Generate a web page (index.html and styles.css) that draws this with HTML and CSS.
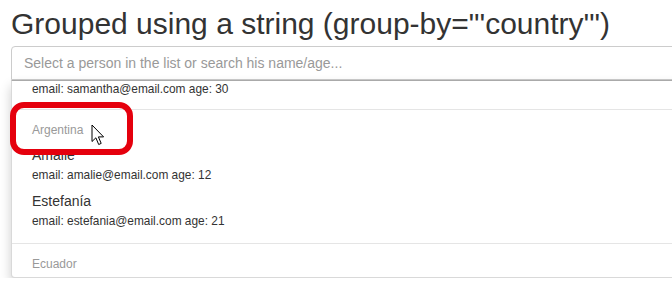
FILE: index.html
```html
<!DOCTYPE html>
<html>
<head>
    <meta charset="UTF-8">
    <title>Grouped using a string</title>
    <link rel="stylesheet" href="styles.css">
</head>
<body>
<div class="page">
    <h3 class="title">Grouped using a string (group-by="'country'")</h3>

    <div class="select">
        <input class="selectInput" type="text" placeholder="Select a person in the list or search his name/age...">
        <ul class="choices">
            <li class="group">
                <div class="row rowCut"><small>email: samantha@email.com age: 30</small></div>
            </li>
            <li class="group">
                <div class="groupLabel">Argentina</div>
                <div class="row">
                    <div class="name">Amalie</div>
                    <small>email: amalie@email.com age: 12</small>
                </div>
                <div class="row">
                    <div class="name">Estefanía</div>
                    <small>email: estefania@email.com age: 21</small>
                </div>
            </li>
            <li class="group last">
                <div class="groupLabel">Ecuador</div>
            </li>
        </ul>

        <!-- annotation over the list -->
        <span class="mark"></span>
        <svg class="cursor" width="14" height="22" viewBox="0 0 14 22">
            <path d="M1 1 L1 17.5 L4.9 13.8 L7.7 20.5 L10.2 19.4 L7.4 12.9 L12.6 12.9 Z" fill="#fff" stroke="#000" stroke-width="1" stroke-linejoin="round"/>
        </svg>
    </div>
</div>
</body>
</html>
```

FILE: styles.css
```css
* {
    margin: 0;
    padding: 0;
    list-style: none;
    box-sizing: border-box;
}

html, body {
    overflow: hidden;
}

body {
    font-family: "Liberation Sans", Arial, Helvetica, sans-serif;
    font-size: 14px;
    color: #333;
    background: #fff;
}

.page {
    padding-left: 11px;
    width: 720px;
}

.title {
    font-size: 30px;
    font-weight: 400;
    line-height: 1.1;
    margin: 7px 0 6px;
    color: #333;
}

.select {
    position: relative;
}

.selectInput {
    display: block;
    width: 100%;
    height: 34px;
    padding: 6px 12px;
    border: 1px solid #ccc;
    border-radius: 4px 4px 0 0;
    font-family: inherit;
    font-size: 14px;
    color: #555;
    outline: none;
}

.selectInput::placeholder {
    color: #999;
}

/* dropdown list */
.choices {
    height: 198px;
    overflow: hidden;
    background: #fff;
    border: 1px solid rgba(0, 0, 0, .15);
    border-top-color: #aaa;
    border-radius: 0 0 4px 4px;
    box-shadow: 0 6px 12px rgba(0, 0, 0, .2);
}

.group {
    border-bottom: 1px solid #e5e5e5;
    padding-bottom: 9px;
}

.group.last {
    border-bottom: 0;
}

.groupLabel {
    padding: 12px 20px 3px;
    font-size: 12px;
    line-height: 17px;
    color: #999;
}

.last .groupLabel {
    padding-top: 12px;
}

.row {
    padding: 3px 20px;
}

.rowCut {
    padding-top: 0;
}

.name {
    line-height: 20px;
}

small {
    display: block;
    font-size: 85%;
    line-height: 20px;
}

.rowCut small {
    line-height: 16px;
}

/* red highlight + pointer */
.mark {
    position: absolute;
    left: -1px;
    top: 56px;
    width: 123px;
    height: 53px;
    border: 6px solid #e5000d;
    border-radius: 14px;
}

.cursor {
    position: absolute;
    left: 80px;
    top: 78px;
}
```
